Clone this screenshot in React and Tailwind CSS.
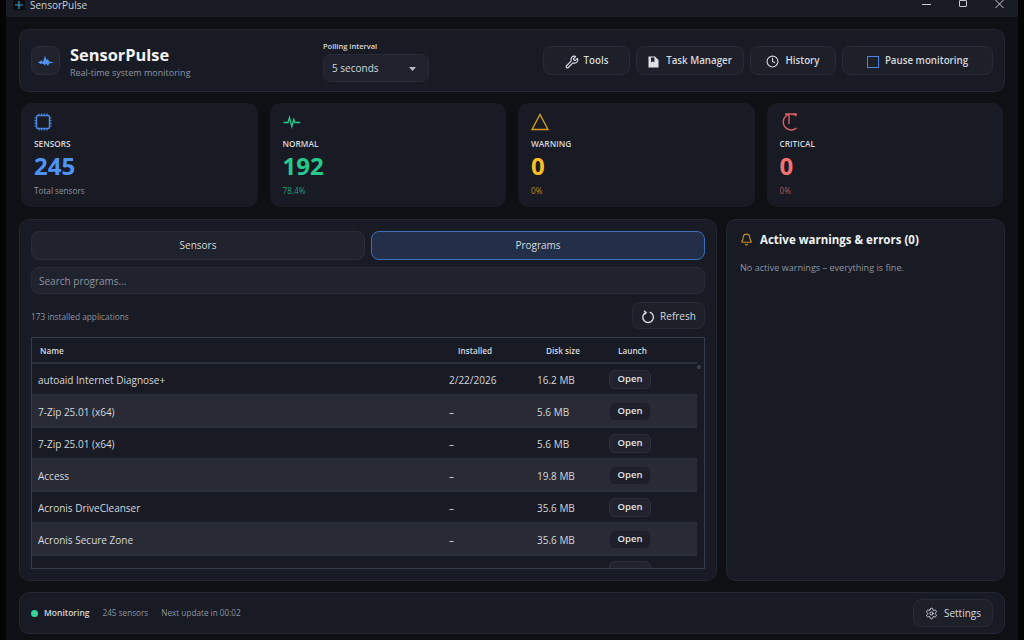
import { Bell, Clock, Settings, Wrench } from 'lucide-react';

const STATS = [
  { label: 'SENSORS', value: '245', note: 'Total sensors', valueCls: 'text-[#4f94f5]', noteCls: 'text-[#8d93a0]', icon: 'chip' },
  { label: 'NORMAL', value: '192', note: '78.4%', valueCls: 'text-[#27c98f]', noteCls: 'text-[#259c74]', icon: 'pulse' },
  { label: 'WARNING', value: '0', note: '0%', valueCls: 'text-[#fbbf24]', noteCls: 'text-[#b98d1c]', icon: 'warn' },
  { label: 'CRITICAL', value: '0', note: '0%', valueCls: 'text-[#f87171]', noteCls: 'text-[#b4565a]', icon: 'crit' },
];

const PROGRAMS = [
  { name: 'autoaid Internet Diagnose+', date: '2/22/2026', size: '16.2 MB' },
  { name: '7-Zip 25.01 (x64)', date: '–', size: '5.6 MB' },
  { name: '7-Zip 25.01 (x64)', date: '–', size: '5.6 MB' },
  { name: 'Access', date: '–', size: '19.8 MB' },
  { name: 'Acronis DriveCleanser', date: '–', size: '35.6 MB' },
  { name: 'Acronis Secure Zone', date: '–', size: '35.6 MB' },
];

function StatIcon({ kind }) {
  if (kind === 'chip') {
    return (
      <svg width="18" height="18" viewBox="0 0 18 18" fill="none" stroke="#4a86e0" strokeWidth="1.2">
        <rect x="2.5" y="2.5" width="13" height="13" rx="1.5" strokeWidth="1.5" />
        <path d="M5 0.5v2M7.7 0.5v2M10.3 0.5v2M13 0.5v2M5 15.5v2M7.7 15.5v2M10.3 15.5v2M13 15.5v2M0.5 5h2M0.5 7.7h2M0.5 10.3h2M0.5 13h2M15.5 5h2M15.5 7.7h2M15.5 10.3h2M15.5 13h2" />
      </svg>
    );
  }
  if (kind === 'pulse') {
    return (
      <svg width="18" height="18" viewBox="0 0 18 18" fill="none" stroke="#27c98f" strokeWidth="1.3">
        <path d="M0.5 9.5h4.5l1.5-5 2.3 9 2-7 1 3h5.5" />
      </svg>
    );
  }
  if (kind === 'warn') {
    return (
      <svg width="18" height="18" viewBox="0 0 18 18" fill="none" stroke="#d69c1c" strokeWidth="1.4">
        <path d="M9 1.5 17 16.5H1Z" />
      </svg>
    );
  }
  return (
    <svg width="18" height="18" viewBox="0 0 18 18" fill="none" stroke="#d95f63" strokeWidth="1.4">
      <path d="M16.5 3A8 8 0 1 0 16.5 15M9 1v10M5 1h12" />
    </svg>
  );
}

function TopButton({ children, className }) {
  return (
    <button className={`h-[29px] pt-[2px] flex items-center justify-center rounded-lg border border-[#272b37] bg-[#1d2029] text-[9.75px] font-semibold text-[#d5d8de] ${className}`}>
      {children}
    </button>
  );
}

function AppIcon() {
  return (
    <svg width="16" height="12" viewBox="0 0 16 12" fill="#4f94f5">
      <path d="M0 7.5 3.5 5.5 5 7 7 0.5 8.5 5 10 4 11 6.5 16 7.5 11 8.5 10 11 8 8.5 7 10.5 5 8.5 3 9Z" />
    </svg>
  );
}

function TaskIcon() {
  return (
    <svg width="11" height="12" viewBox="0 0 11 12" fill="#dfe1e6">
      <path d="M0.5 0.5h6.5L10.5 4v7.5H0.5ZM3 1.5v5l1.7-1.2 1.7 1.2V1.5Z" fillRule="evenodd" />
    </svg>
  );
}

function RefreshIcon() {
  return (
    <svg width="14" height="14" viewBox="0 0 14 14" fill="none" stroke="#d5d8de" strokeWidth="1.4">
      <path d="M4.8 2.4A5.3 5.3 0 1 0 8.6 2.1" />
      <path d="M3 0.8 5.2 2.5 3.4 4.6" />
    </svg>
  );
}

export default function App() {
  return (
    <div className="w-[1024px] h-[640px] overflow-hidden flex bg-[#0e1014] font-['Open_Sans','Noto_Sans',sans-serif]">
      <div className="w-[6px] shrink-0 bg-[#050506]" />
      <div className="w-[1012px] shrink-0 flex flex-col">
        <div className="h-[17px] shrink-0 bg-[#191c25] flex items-start justify-between pl-[7px] pr-[14px]">
          <div className="flex items-start gap-[5px]">
            <div className="w-[12px] h-[10px] flex items-center justify-center bg-[#0c0d11]">
              <svg width="8" height="8" viewBox="0 0 8 8" fill="#3aa0c8"><path d="M3.4 0h1.2v3.4H8v1.2H4.6V8H3.4V4.6H0V3.4h3.4Z" /></svg>
            </div>
            <span className="text-[10px] leading-[10px] text-[#c9ccd2]">SensorPulse</span>
          </div>
          <div className="flex items-start gap-[28px] text-[#c9ccd2]">
            <div className="w-[9px] h-px bg-[#c9ccd2] mt-[4px]" />
            <div className="w-[8px] h-[7px] border border-[#c9ccd2] rounded-[1px]" />
            <svg width="9" height="8" viewBox="0 0 9 8" stroke="#c9ccd2" strokeWidth="1"><path d="M0.5 0l8 8M8.5 0l-8 8" /></svg>
          </div>
        </div>

        <div className="flex-1 flex flex-col pl-[13px] pr-[13px] pt-[12px] pb-[6px]">
          <header className="h-[63px] shrink-0 flex items-center pl-[11px] pr-[11px] rounded-[10px] border border-[#232733] bg-[#181b24]">
            <div className="w-[29px] h-[29px] rounded-lg border border-[#2a2e3a] bg-[#20232d] flex items-center justify-center">
              <AppIcon />
            </div>
            <div className="ml-[10px] mt-[4px] w-[253px]">
              <div className="text-[16.4px] leading-[18px] mt-[1px] font-bold text-[#f1f2f4]">SensorPulse</div>
              <div className="mt-[2px] text-[9px] leading-[14px] text-[#8d93a0]">Real-time system monitoring</div>
            </div>
            <div className="flex flex-col mt-[1px]">
              <span className="text-[7.5px] leading-[11px] font-semibold text-[#d5d8de] mb-[2px]">Polling interval</span>
              <div className="w-[106px] h-[28px] pt-[2px] flex items-center justify-between pl-[8px] pr-[12px] rounded-lg border border-[#272b37] bg-[#1f222c]">
                <span className="text-[10px] text-[#d5d8de]">5 seconds</span>
                <svg width="7" height="4" viewBox="0 0 7 4" fill="#b5b9c2"><path d="M0 0h7L3.5 4Z" /></svg>
              </div>
            </div>
            <div className="ml-auto flex items-center gap-[6px]">
              <TopButton className="w-[87px] gap-[5px]"><Wrench size={14} strokeWidth={2} />Tools</TopButton>
              <TopButton className="w-[108px] gap-[7px]"><TaskIcon />Task Manager</TopButton>
              <TopButton className="w-[86px] gap-[6px]"><Clock size={13} strokeWidth={2} />History</TopButton>
              <TopButton className="w-[151px] gap-[6px]"><span className="w-[12px] h-[12px] border-[1.5px] border-[#4a86e0]" />Pause monitoring</TopButton>
            </div>
          </header>

          <section className="mt-[11px] h-[104px] shrink-0 grid grid-cols-4 gap-x-[12px] px-[2px]">
            {STATS.map((s) => (
              <div key={s.label} className="rounded-[10px] bg-[#181b24] pl-[13px] pt-[10px]">
                <StatIcon kind={s.icon} />
                <div className="mt-[7px] text-[8.3px] leading-[12px] font-semibold text-[#d5d8de]">{s.label}</div>
                <div className={`mt-[1px] text-[24px] leading-[30px] font-bold ${s.valueCls}`}>{s.value}</div>
                <div className={`mt-[4px] text-[8.2px] leading-[12px] ${s.noteCls}`}>{s.note}</div>
              </div>
            ))}
          </section>

          <section className="mt-[12px] h-[362px] shrink-0 flex gap-[9px]">
            <div className="w-[698px] shrink-0 flex flex-col rounded-[10px] border border-[#232733] bg-[#181b24] px-[11px] pt-[11px]">
              <div className="flex gap-[6px]">
                <button className="flex-1 h-[29px] rounded-lg border border-[#2a2e3a] bg-[#20232d] text-[10px] text-[#d5d8de]">Sensors</button>
                <button className="flex-1 h-[29px] rounded-lg border border-[#3d6fb8] bg-[#232f48] text-[10px] text-[#d5d8de]">Programs</button>
              </div>
              <div className="mt-[7px] h-[27px] pt-[2px] flex items-center pl-[7px] rounded-lg border border-[#272b37] bg-[#20232d] text-[10px] text-[#8d93a0]">Search programs...</div>
              <div className="mt-[8px] h-[27px] flex items-center justify-between">
                <span className="mt-[4px] text-[8.3px] text-[#8d93a0]">173 installed applications</span>
                <button className="w-[73px] h-[27px] pt-[2px] flex items-center justify-center gap-[5px] rounded-lg border border-[#272b37] bg-[#1d2029] text-[10px] text-[#d5d8de]">
                  <RefreshIcon />Refresh
                </button>
              </div>
              <div className="mt-[8px] h-[232px] overflow-hidden border border-[#343b4d] relative">
                <div className="w-[665px] h-[26px] pt-[2px] flex items-center border-b-2 border-[#2a2f3d] text-[8.2px] font-semibold text-[#d5d8de]">
                  <span className="w-[417px] pl-[8px]">Name</span>
                  <span className="w-[88px] pl-[9px]">Installed</span>
                  <span className="w-[72px] pl-[9px]">Disk size</span>
                  <span className="pl-[9px]">Launch</span>
                </div>
                {PROGRAMS.map((p, i) => (
                  <div key={i} className={`w-[665px] h-[32px] pt-[2px] flex items-center border-b-2 border-[#2a2f3d] text-[10px] text-[#d5d8de] ${i % 2 === 1 ? 'bg-[#282b36]' : ''}`}>
                    <span className="w-[417px] pl-[6px]">{p.name}</span>
                    <span className="w-[88px]">{p.date}</span>
                    <span className="w-[72px]">{p.size}</span>
                    <button className={`w-[42px] h-[19px] -mt-[2px] rounded-md border text-[9.5px] font-semibold text-[#e2e4e8] ${i % 2 === 1 ? 'border-[#262a35] bg-[#1d2029]' : 'border-[#2c303c] bg-[#20232d]'}`}>Open</button>
                  </div>
                ))}
                <div className="w-[665px] h-[32px] pl-[577px] pt-[5px]">
                  <div className="w-[42px] h-[19px] rounded-md border border-[#2c303c] bg-[#20232d]" />
                </div>
                <div className="absolute right-[3px] top-[27px] w-[4px] h-[4px] rounded-full bg-[#3a4050]" />
              </div>
            </div>
            <div className="flex-1 rounded-[10px] border border-[#232733] bg-[#181b24] pl-[13px] pt-[11px]">
              <div className="flex items-center gap-[7px]">
                <Bell size={13} strokeWidth={2} className="text-[#c9921a]" />
                <span className="text-[11.5px] leading-[17px] font-bold text-[#f1f2f4]">Active warnings &amp; errors (0)</span>
              </div>
              <p className="mt-[13px] text-[9.1px] leading-[13px] text-[#8d93a0]">No active warnings – everything is fine.</p>
            </div>
          </section>

          <footer className="mt-[11px] h-[42px] shrink-0 flex items-center pl-[11px] pr-[11px] rounded-[10px] border border-[#232733] bg-[#181b24]">
            <span className="w-[7px] h-[7px] rounded-full bg-[#34d399]" />
            <span className="ml-[6px] text-[8.5px] font-semibold text-[#d5d8de]">Monitoring</span>
            <span className="ml-[13px] text-[8.2px] text-[#8d93a0]">245 sensors</span>
            <span className="ml-[13px] text-[8.2px] text-[#8d93a0]">Next update in 00:02</span>
            <button className="ml-auto w-[80px] h-[28px] flex items-center justify-center gap-[6px] rounded-lg border border-[#272b37] bg-[#1d2029] text-[10px] text-[#d5d8de]">
              <Settings size={13} strokeWidth={1.75} />Settings
            </button>
          </footer>
        </div>
      </div>
      <div className="flex-1 bg-[#050506]" />
    </div>
  );
}
